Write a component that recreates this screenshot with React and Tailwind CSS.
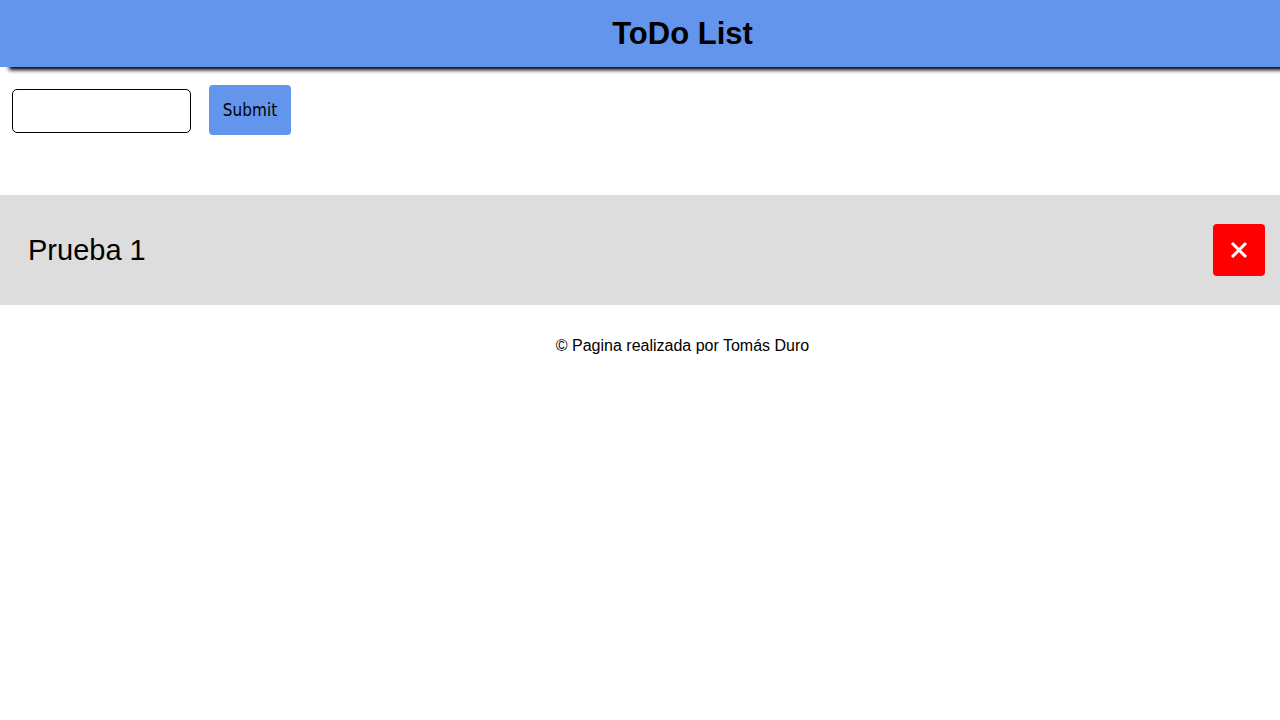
export default function App() {
  return (
    <div className="min-h-[720px] bg-white" style={{ fontFamily: '"Liberation Sans", Arial, sans-serif' }}>
      <header className="h-[67px] bg-[#6495ed] shadow-[9px_3px_4px_#000] flex items-center justify-center pl-[85px]">
        <h1 className="text-[31px] font-bold text-black leading-none -mt-[1px]">ToDo List</h1>
      </header>
      <div className="flex items-center pl-[12px] pt-[18px]">
        <input
          type="text"
          className="mt-[2px] w-[179px] h-[44px] border border-black rounded-[5px] bg-white outline-none"
        />
        <button
          className="ml-[18px] w-[82px] h-[50px] pt-[2px] bg-[#6495ed] rounded-[4px] text-black"
          style={{ fontFamily: '"DejaVu Sans Condensed", "DejaVu Sans", sans-serif', fontSize: '17px' }}
        >
          Submit
        </button>
      </div>
      <div className="mt-[60px] h-[110px] bg-[#dddddd] flex items-center justify-between pl-[28px] pr-[15px]">
        <span className="text-[29px] text-black pt-[2px]">Prueba 1</span>
        <button className="w-[52px] h-[52px] bg-[#ff0000] rounded-[4px] flex items-center justify-center">
          <svg width="18" height="18" viewBox="0 0 18 18">
            <path d="M2 2 L16 16 M16 2 L2 16" stroke="white" strokeWidth="3" strokeLinecap="butt" />
          </svg>
        </button>
      </div>
      <footer className="pt-[33px] flex justify-center pl-[85px]">
        <p className="text-[16px] text-black leading-none">© Pagina realizada por Tomás Duro</p>
      </footer>
    </div>
  );
}
